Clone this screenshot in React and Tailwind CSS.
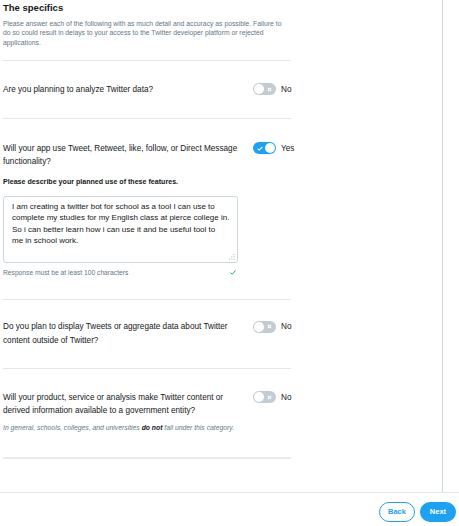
import React from "react";

function Toggle({ on }) {
  return (
    <div className="flex items-center gap-[5px] h-[13px]">
      {on ? (
        <div className="w-[23px] h-[12px] rounded-full bg-[#1da1f2] flex items-center justify-between pl-[4px] pr-[1px]">
          <svg width="6" height="5" viewBox="0 0 6 5">
            <path d="M0.6 2.6 L2.3 4.1 L5.4 0.8" fill="none" stroke="white" strokeWidth="1.1" />
          </svg>
          <div className="w-[10px] h-[10px] rounded-full bg-white" />
        </div>
      ) : (
        <div className="w-[23px] h-[12px] rounded-full bg-[#c3ccd3] flex items-center justify-between pl-[1px] pr-[4px]">
          <div className="w-[10px] h-[10px] rounded-full bg-white" />
          <svg width="5" height="5" viewBox="0 0 5 5">
            <path d="M0.8 0.8 L4.2 4.2 M4.2 0.8 L0.8 4.2" stroke="white" strokeWidth="1.1" />
          </svg>
        </div>
      )}
      <span className="text-[8.2px] leading-[13px] text-[#14171a]">{on ? "Yes" : "No"}</span>
    </div>
  );
}

function Question({ lines, on }) {
  return (
    <div className="flex items-start">
      <div className="w-[250px] text-[8.2px] leading-[13.5px] text-[#14171a] whitespace-nowrap">
        {lines.map((l) => (
          <div key={l}>{l}</div>
        ))}
      </div>
      <Toggle on={on} />
    </div>
  );
}

function Divider() {
  return <div className="w-[288px] h-px bg-[#e1e8ed]" />;
}

export default function App() {
  const answer = [
    "I am creating a twitter bot for school as a tool I can use to",
    "complete my studies for my English class at pierce college in.",
    "So i can better learn how i can use it and be useful tool to",
    "me in school work.",
  ];
  const intro = [
    "Please answer each of the following with as much detail and accuracy as possible. Failure to",
    "do so could result in delays to your access to the Twitter developer platform or rejected",
    "applications.",
  ];

  return (
    <div className="w-[459px] h-[526px] bg-white flex flex-col font-['Liberation_Sans',Arial,sans-serif] overflow-hidden">
      <div className="h-[492px] flex">
        <div className="w-[443px] border-r border-[#ccd6dd] pl-[3px]">
          <div className="pt-[2px]">
            <h1 className="text-[9.5px] leading-[12px] font-bold text-[#14171a]">The specifics</h1>
            <div className="mt-[5px] text-[6.8px] leading-[9.3px] text-[#657786] whitespace-nowrap">
              {intro.map((l) => (
                <div key={l}>{l}</div>
              ))}
            </div>
          </div>
          <div className="mt-[13px]">
            <Divider />
          </div>

          <div className="h-[57px] flex items-center">
            <Question lines={["Are you planning to analyze Twitter data?"]} on={false} />
          </div>
          <Divider />

          <div className="pt-[23px] pb-[22px]">
            <Question
              lines={["Will your app use Tweet, Retweet, like, follow, or Direct Message", "functionality?"]}
              on={true}
            />
            <div className="mt-[9px] text-[7.1px] leading-[9px] font-bold text-[#14171a]">
              Please describe your planned use of these features.
            </div>
            <div className="mt-[9px] w-[235px] h-[67px] border border-[#ccd6dd] rounded-[3px] pl-[8px] pt-[4px] flex flex-col justify-between">
              <div className="text-[8px] leading-[11.4px] text-[#14171a] whitespace-nowrap">
                {answer.map((l) => (
                  <div key={l}>{l}</div>
                ))}
              </div>
              <div className="flex justify-end pr-[2px] pb-[2px]">
                <svg width="6" height="6" viewBox="0 0 6 6" fill="#aab8c2">
                  <rect x="4.5" y="0" width="1" height="1" />
                  <rect x="4.5" y="2.2" width="1" height="1" />
                  <rect x="2.3" y="2.2" width="1" height="1" />
                  <rect x="4.5" y="4.5" width="1" height="1" />
                  <rect x="2.3" y="4.5" width="1" height="1" />
                  <rect x="0" y="4.5" width="1" height="1" />
                </svg>
              </div>
            </div>
            <div className="mt-[6px] w-[235px] flex items-center justify-between pr-[2px]">
              <span className="text-[6.7px] leading-[8px] text-[#657786]">Response must be at least 100 characters</span>
              <svg width="6" height="5" viewBox="0 0 6 5">
                <path d="M0.5 2.6 L2.2 4.2 L5.5 0.6" fill="none" stroke="#17bf63" strokeWidth="1" />
              </svg>
            </div>
          </div>
          <Divider />

          <div className="h-[68px] flex items-center">
            <Question
              lines={["Do you plan to display Tweets or aggregate data about Twitter", "content outside of Twitter?"]}
              on={false}
            />
          </div>
          <Divider />

          <div className="pt-[22px] pb-[25px]">
            <Question
              lines={["Will your product, service or analysis make Twitter content or", "derived information available to a government entity?"]}
              on={false}
            />
            <div className="mt-[6px] text-[6.8px] leading-[8px] italic text-[#657786]">
              In general, schools, colleges, and universities <span className="font-bold text-[#14171a]">do not</span> fall under this category.
            </div>
          </div>
          <div className="w-[288px] h-[2px] bg-[#e6ecf0]" />
        </div>
      </div>

      <div className="flex-1 border-t border-[#e1e8ed] flex justify-end items-start pt-[9px] pr-[3px] gap-[5px]">
        <button className="w-[36px] h-[20px] rounded-full border border-[#1da1f2] bg-white text-[#1da1f2] text-[7.5px] font-bold">
          Back
        </button>
        <button className="w-[36px] h-[20px] rounded-full bg-[#1da1f2] text-white text-[7.5px] font-bold">
          Next
        </button>
      </div>
    </div>
  );
}
